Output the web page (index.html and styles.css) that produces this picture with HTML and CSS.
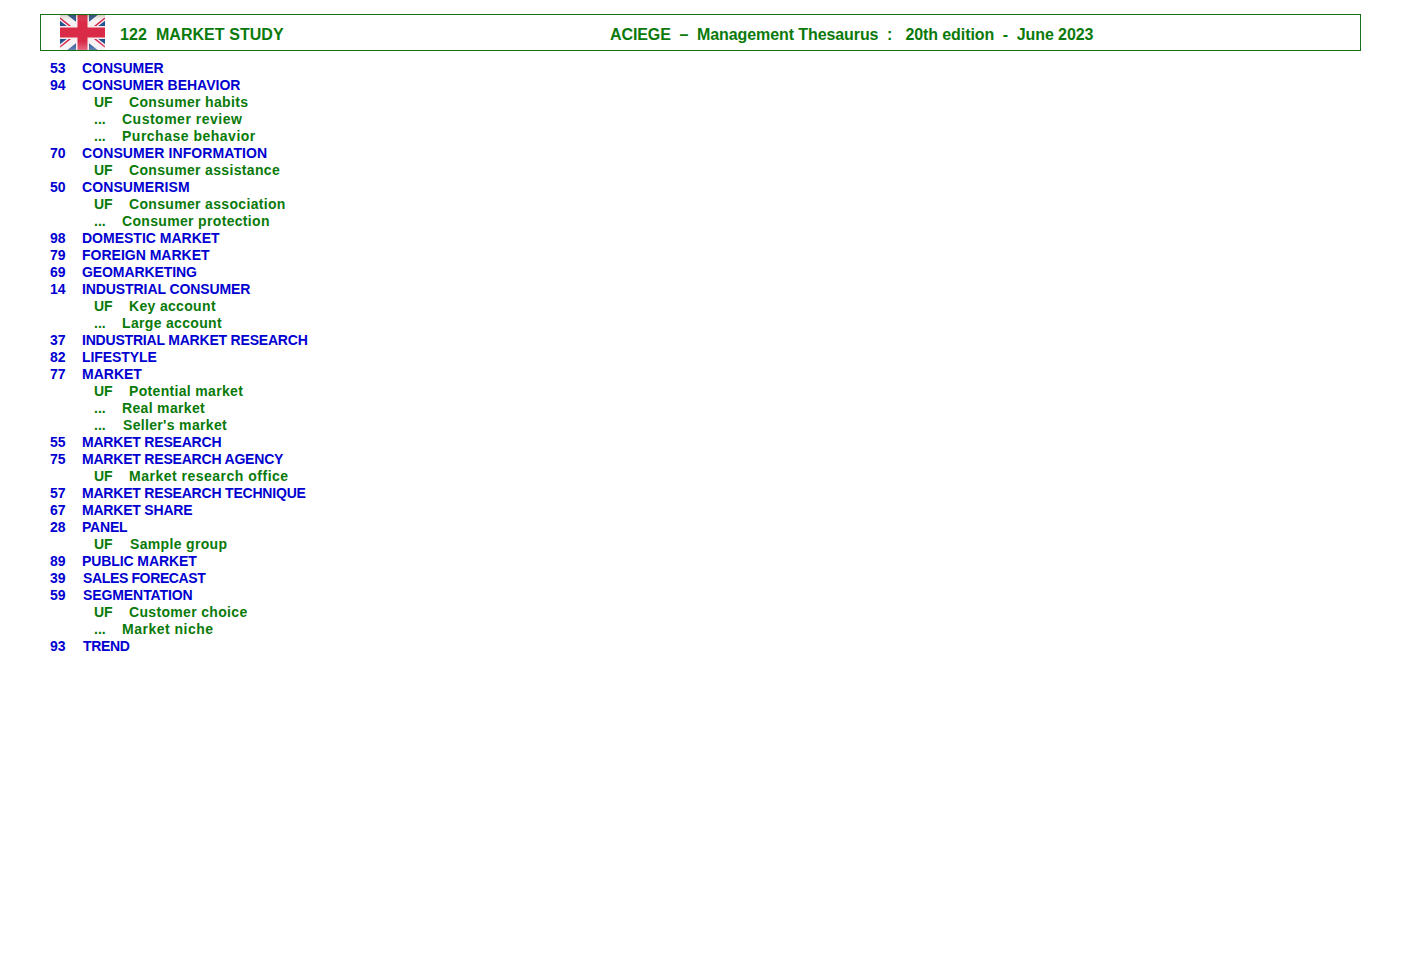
FILE: index.html
```html
<!DOCTYPE html>
<html lang="en">
<head>
<meta charset="utf-8">
<title>122 MARKET STUDY</title>
<link rel="stylesheet" href="styles.css">
</head>
<body>
<header class="banner">
  <svg class="flag" width="45" height="35" viewBox="0 0 45 35" aria-hidden="true">
    <defs>
      <linearGradient id="sheen" x1="0" y1="0" x2="0" y2="1">
        <stop offset="0" stop-color="#7a5a20" stop-opacity=".25"/>
        <stop offset=".2" stop-color="#fff" stop-opacity="0"/>
        <stop offset=".75" stop-color="#fff" stop-opacity="0"/>
        <stop offset="1" stop-color="#fff" stop-opacity=".3"/>
      </linearGradient>
    </defs>
    <rect width="45" height="35" fill="#23508f"/>
    <path d="M0 0L45 35M45 0L0 35" stroke="#f6f2f4" stroke-width="9"/>
    <path d="M0 3L18 17.5M45 32L27 17.5M45 3L27 17.5M0 32L18 17.5" stroke="#d8234a" stroke-width="1.6"/>
    <path d="M22.5 0V35M0 17.5H45" stroke="#f6ecee" stroke-width="13"/>
    <path d="M22.5 0V35M0 17.5H45" stroke="#d92a48" stroke-width="10"/>
    <rect width="45" height="35" fill="url(#sheen)"/>
  </svg>
  <span class="banner-title">122&nbsp; MARKET STUDY</span>
  <span class="banner-source">ACIEGE &nbsp;&#8211;&nbsp; Management Thesaurus &nbsp;:&nbsp;&nbsp; 20th edition &nbsp;-&nbsp; June 2023</span>
</header>
<main class="list">
  <div class="row term"><span class="num">53</span><span>CONSUMER</span></div>
  <div class="row term"><span class="num">94</span><span>CONSUMER BEHAVIOR</span></div>
  <div class="row uf"><span class="tag">UF</span><span>Consumer habits</span></div>
  <div class="row rel"><span class="tag">...</span><span class="wide">Customer review</span></div>
  <div class="row rel"><span class="tag">...</span><span class="wide">Purchase behavior</span></div>
  <div class="row term"><span class="num">70</span><span class="wide">CONSUMER INFORMATION</span></div>
  <div class="row uf"><span class="tag">UF</span><span>Consumer assistance</span></div>
  <div class="row term"><span class="num">50</span><span class="wide">CONSUMERISM</span></div>
  <div class="row uf"><span class="tag">UF</span><span>Consumer association</span></div>
  <div class="row rel"><span class="tag">...</span><span>Consumer protection</span></div>
  <div class="row term"><span class="num">98</span><span>DOMESTIC MARKET</span></div>
  <div class="row term"><span class="num">79</span><span>FOREIGN MARKET</span></div>
  <div class="row term"><span class="num">69</span><span class="slight">GEOMARKETING</span></div>
  <div class="row term"><span class="num">14</span><span class="slight">INDUSTRIAL CONSUMER</span></div>
  <div class="row uf"><span class="tag">UF</span><span>Key account</span></div>
  <div class="row rel"><span class="tag">...</span><span>Large account</span></div>
  <div class="row term"><span class="num">37</span><span class="tight">INDUSTRIAL MARKET RESEARCH</span></div>
  <div class="row term"><span class="num">82</span><span class="slight">LIFESTYLE</span></div>
  <div class="row term"><span class="num">77</span><span>MARKET</span></div>
  <div class="row uf"><span class="tag">UF</span><span>Potential market</span></div>
  <div class="row rel"><span class="tag">...</span><span>Real market</span></div>
  <div class="row rel"><span class="tag">...</span><span class="nudge">Seller's market</span></div>
  <div class="row term"><span class="num">55</span><span class="tight">MARKET RESEARCH</span></div>
  <div class="row term"><span class="num">75</span><span class="tight">MARKET RESEARCH AGENCY</span></div>
  <div class="row uf"><span class="tag">UF</span><span class="wide">Market research office</span></div>
  <div class="row term"><span class="num">57</span><span class="tight">MARKET RESEARCH TECHNIQUE</span></div>
  <div class="row term"><span class="num">67</span><span class="tight">MARKET SHARE</span></div>
  <div class="row term"><span class="num">28</span><span class="tight">PANEL</span></div>
  <div class="row uf"><span class="tag">UF</span><span class="nudge">Sample group</span></div>
  <div class="row term"><span class="num">89</span><span class="slight">PUBLIC MARKET</span></div>
  <div class="row term"><span class="num">39</span><span class="tighter nudge">SALES FORECAST</span></div>
  <div class="row term"><span class="num">59</span><span class="slight nudge">SEGMENTATION</span></div>
  <div class="row uf"><span class="tag">UF</span><span>Customer choice</span></div>
  <div class="row rel"><span class="tag">...</span><span class="wide">Market niche</span></div>
  <div class="row term"><span class="num">93</span><span class="tighter nudge">TREND</span></div>
</main>
</body>
</html>
```
FILE: styles.css
```css
html, body {
  margin: 0;
  background: #fff;
}
body {
  padding: 14px 49px 0 40px;
  font-family: "Liberation Sans", Arial, sans-serif;
  font-weight: bold;
  font-size: 14px;
}
.banner {
  box-sizing: border-box;
  height: 37px;
  border: 1px solid #177017;
  color: #0a7a0a;
  font-size: 16px;
  display: flex;
  align-items: center;
  padding-left: 19px;
  white-space: pre;
}
.flag {
  flex: none;
  margin-right: 15px;
  filter: blur(0.35px);
}
.banner-title {
  width: 490px;
  padding-top: 5px;
  letter-spacing: 0.06px;
}
.banner-source {
  padding-top: 5px;
  letter-spacing: -0.09px;
}
.list {
  padding: 9px 0 0 10px;
}
.row {
  display: flex;
  height: 17px;
  line-height: 17px;
  white-space: pre;
}
.term {
  color: #0000d0;
}
.uf, .rel {
  color: #0a7a0a;
  padding-left: 44px;
  letter-spacing: 0.33px;
}
.num {
  width: 32px;
}
.tag {
  letter-spacing: 0;
}
.uf .tag {
  width: 35px;
}
.rel .tag {
  width: 28px;
}
.term .wide {
  letter-spacing: 0.1px;
}
.uf .wide, .rel .wide {
  letter-spacing: 0.5px;
}
.slight {
  letter-spacing: -0.09px;
}
.tight {
  letter-spacing: -0.2px;
}
.tighter {
  letter-spacing: -0.36px;
}
.nudge {
  margin-left: 1px;
}
```
